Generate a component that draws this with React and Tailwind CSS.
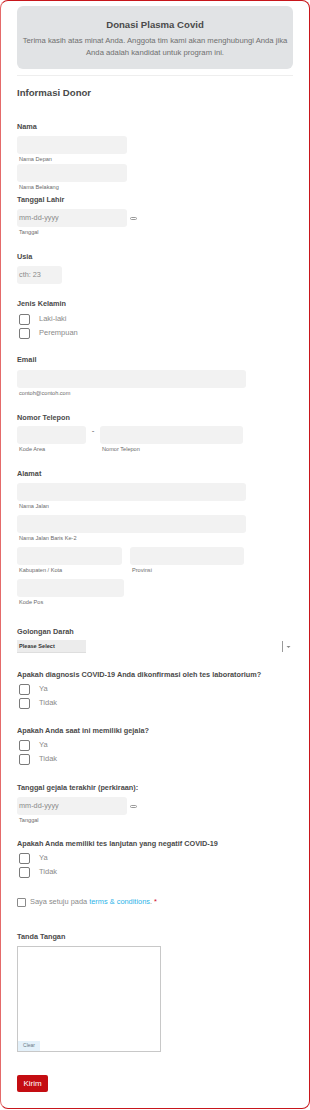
import React from "react";

const font = { fontFamily: '"Liberation Sans", Arial, Helvetica, sans-serif' };

function Label({ children, className = "" }) {
  return (
    <div className={`text-[7.3px] leading-[10px] font-bold text-[#4a4a4a] whitespace-nowrap ${className}`}>
      {children}
    </div>
  );
}

function Sub({ children, className = "" }) {
  return (
    <div className={`text-[5.6px] leading-[8px] text-[#6b6b6b] pl-[2px] mt-[1px] whitespace-nowrap ${className}`}>
      {children}
    </div>
  );
}

function Input({ w, className = "", placeholder }) {
  return (
    <div
      className={`h-[18px] rounded-[3px] bg-[#f2f2f2] flex items-center pl-[2px] text-[7.3px] text-[#8a8a8a] ${w} ${className}`}
    >
      {placeholder}
    </div>
  );
}

function Check({ label }) {
  return (
    <div className="h-[14px] flex items-center">
      <div className="ml-[2px] w-[11px] h-[11px] rounded-[2px] border border-[#7a7a7a] bg-white" />
      <span className="ml-[9px] text-[7.5px] text-[#8a8a8a]">{label}</span>
    </div>
  );
}

function DateField() {
  return (
    <div className="flex items-center">
      <Input w="w-[110px]" placeholder="mm-dd-yyyy" />
      <div className="ml-[3px] w-[7px] h-[3px] rounded-[2px] border border-[#9a9a9a]" />
    </div>
  );
}

export default function App() {
  return (
    <div style={font} className="w-[310px] h-[1110px] bg-white">
      <div className="h-[1109px] border border-[#c8161b] border-l-[#e46a6a] rounded-[8px] px-[16px] pt-[5px]">
        {/* Header */}
        <div className="h-[63px] rounded-[6px] bg-[#e1e3e5] pt-[12px] text-center">
          <div className="text-[9.6px] leading-[14px] font-bold text-[#4a4a4a]">Donasi Plasma Covid</div>
          <div className="mt-[3px] text-[7.7px] leading-[12px] text-[#6f6f6f]">
            Terima kasih atas minat Anda. Anggota tim kami akan menghubungi Anda jika Anda adalah kandidat untuk program ini.
          </div>
        </div>
        <div className="mt-[6px] h-px bg-[#eeeeee]" />

        <div className="mt-[10px] text-[9.6px] leading-[14px] font-bold text-[#4a4a4a]">Informasi Donor</div>

        {/* Nama */}
        <Label className="mt-[22px]">Nama</Label>
        <Input w="w-[110px]" className="mt-[4px]" />
        <Sub>Nama Depan</Sub>
        <Input w="w-[110px]" className="mt-[1px]" />
        <Sub>Nama Belakang</Sub>

        {/* Tanggal Lahir */}
        <Label className="mt-[4px]">Tanggal Lahir</Label>
        <div className="mt-[4px]">
          <DateField />
        </div>
        <Sub>Tanggal</Sub>

        {/* Usia */}
        <Label className="mt-[16px]">Usia</Label>
        <Input w="w-[45px]" className="mt-[4px]" placeholder="cth: 23" />

        {/* Jenis Kelamin */}
        <Label className="mt-[15px]">Jenis Kelamin</Label>
        <div className="mt-[3px]">
          <Check label="Laki-laki" />
          <Check label="Perempuan" />
        </div>

        {/* Email */}
        <Label className="mt-[15px]">Email</Label>
        <Input w="w-[229px]" className="mt-[5px]" />
        <Sub>contoh@contoh.com</Sub>

        {/* Telepon */}
        <Label className="mt-[16px]">Nomor Telepon</Label>
        <div className="mt-[3px] flex">
          <div>
            <Input w="w-[69px]" />
            <Sub>Kode Area</Sub>
          </div>
          <div className="w-[14px] text-center text-[8px] leading-[10px] text-[#555]">-</div>
          <div>
            <Input w="w-[143px]" />
            <Sub>Nomor Telepon</Sub>
          </div>
        </div>

        {/* Alamat */}
        <Label className="mt-[16px]">Alamat</Label>
        <Input w="w-[229px]" className="mt-[4px]" />
        <Sub>Nama Jalan</Sub>
        <Input w="w-[229px]" className="mt-[5px]" />
        <Sub>Nama Jalan Baris Ke-2</Sub>
        <div className="mt-[5px] flex gap-[8px]">
          <div>
            <Input w="w-[105px]" />
            <Sub>Kabupaten / Kota</Sub>
          </div>
          <div>
            <Input w="w-[114px]" />
            <Sub>Provinsi</Sub>
          </div>
        </div>
        <Input w="w-[107px]" className="mt-[5px]" />
        <Sub>Kode Pos</Sub>

        {/* Golongan Darah */}
        <Label className="mt-[21px]">Golongan Darah</Label>
        <div className="mt-[3px] flex items-center h-[13px]">
          <div className="w-[69px] h-[13px] bg-[#ececec] border-b border-[#dedede] flex items-center pl-[2px] text-[5.6px] font-bold text-[#333]">
            Please Select
          </div>
          <div className="flex-1" />
          <div className="w-px h-[11px] bg-[#9a9a9a]" />
          <svg width="9" height="6" viewBox="0 0 9 6" className="ml-[1px]">
            <path d="M2.5 2 L4.5 4 L6.5 2 Z" fill="#888" />
          </svg>
        </div>

        {/* Q1 */}
        <Label className="mt-[17px]">Apakah diagnosis COVID-19 Anda dikonfirmasi oleh tes laboratorium?</Label>
        <div className="mt-[2px]">
          <Check label="Ya" />
          <Check label="Tidak" />
        </div>

        {/* Q2 */}
        <Label className="mt-[16px]">Apakah Anda saat ini memiliki gejala?</Label>
        <div className="mt-[2px]">
          <Check label="Ya" />
          <Check label="Tidak" />
        </div>

        {/* Q3 */}
        <Label className="mt-[17px]">Tanggal gejala terakhir (perkiraan):</Label>
        <div className="mt-[4px]">
          <DateField />
        </div>
        <Sub>Tanggal</Sub>

        {/* Q4 */}
        <Label className="mt-[15px]">Apakah Anda memiliki tes lanjutan yang negatif COVID-19</Label>
        <div className="mt-[2px]">
          <Check label="Ya" />
          <Check label="Tidak" />
        </div>

        {/* Terms */}
        <div className="mt-[18px] h-[10px] flex items-center">
          <div className="w-[9px] h-[9px] rounded-[1px] border border-[#8a8a8a] bg-white" />
          <span className="ml-[4px] text-[7.4px] text-[#8a8a8a] whitespace-nowrap">
            Saya setuju pada <span className="text-[#2bb3e8]">terms &amp; conditions</span>.{" "}
            <span className="text-[#d0021b]">*</span>
          </span>
        </div>

        {/* Tanda Tangan */}
        <Label className="mt-[25px]">Tanda Tangan</Label>
        <div className="mt-[4px] w-[144px] h-[106px] border border-[#c8c8c8] flex flex-col justify-end">
          <div className="w-[22px] h-[10px] bg-[#e4f1fa] flex items-center justify-center text-[5px] text-[#6b7a86]">
            Clear
          </div>
        </div>

        {/* Kirim */}
        <div className="mt-[23px] w-[31px] h-[17px] rounded-[2px] bg-[#c40d12] flex items-center justify-center text-[8px] text-white">
          Kirim
        </div>
      </div>
    </div>
  );
}
